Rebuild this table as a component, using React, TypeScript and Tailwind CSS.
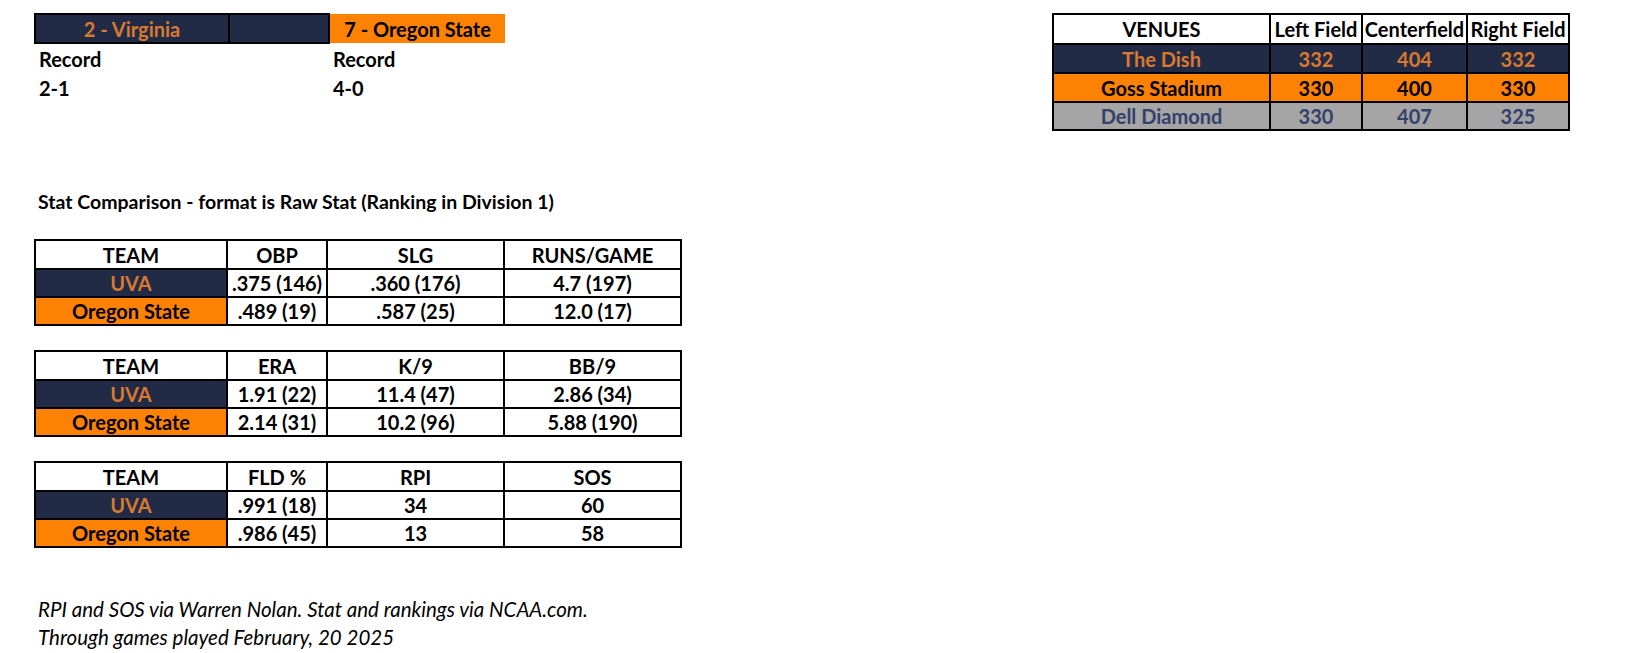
import React from "react";

const NAVY = "bg-[#222b45]";
const ORANGE_BG = "bg-[#fd8204]";

type Row = { team: "uva" | "osu"; vals: string[] };

function StatTable({ headers, rows }: { headers: string[]; rows: Row[] }) {
  return (
    <div className="grid grid-cols-[190px_98px_175px_175px] grid-rows-[27px_26px_26px] gap-[2px] border-2 border-black bg-black w-[648px]">
      {headers.map((h, i) => (
        <div key={i} className="bg-white flex items-center justify-center text-black">
          {h}
        </div>
      ))}
      {rows.map((r, ri) => (
        <React.Fragment key={ri}>
          <div
            className={
              r.team === "uva"
                ? "bg-[#222b45] text-[#d9792f] flex items-center justify-center"
                : "bg-[#fd8204] text-black flex items-center justify-center"
            }
          >
            {r.team === "uva" ? "UVA" : "Oregon State"}
          </div>
          {r.vals.map((v, vi) => (
            <div key={vi} className="bg-white flex items-center justify-center text-black">
              {v}
            </div>
          ))}
        </React.Fragment>
      ))}
    </div>
  );
}

export default function App() {
  return (
    <div
      className="w-[1630px] h-[653px] bg-white text-black font-bold text-[20px] leading-none relative overflow-hidden"
      style={{ fontFamily: "Lato, 'Open Sans', sans-serif" }}
    >
      <div className="flex items-start pt-[13px] h-[130px]">
        {/* Left block */}
        <div className="ml-[34px] w-[471px]">
          <div className="flex items-start">
            <div className="grid grid-cols-[192px_98px] gap-[2px] bg-black border-2 border-black h-[31px]">
              <div className={`${NAVY} text-[#d9792f] flex items-center justify-center`}>2 - Virginia</div>
              <div className={NAVY}></div>
            </div>
            <div className={`${ORANGE_BG} mt-[1px] w-[176px] h-[29px] flex items-center justify-center text-black`}>
              7 - Oregon State
            </div>
          </div>
          <div className="grid grid-cols-[294px_177px]">
            <div className="h-[29px] flex items-center pl-[5px]">Record</div>
            <div className="h-[29px] flex items-center pl-[5px]">Record</div>
            <div className="h-[29px] flex items-center pl-[5px]">2-1</div>
            <div className="h-[29px] flex items-center pl-[5px]">4-0</div>
          </div>
        </div>

        {/* Venues */}
        <div className="ml-[547px] grid grid-cols-[215px_90px_103px_100px] grid-rows-[28px_27px_27px_26px] gap-[2px] bg-black border-2 border-black w-[518px]">
          <div className="bg-white flex items-center justify-center">VENUES</div>
          <div className="bg-white flex items-center justify-center">Left Field</div>
          <div className="bg-white flex items-center justify-center">Centerfield</div>
          <div className="bg-white flex items-center justify-center">Right Field</div>

          <div className={`${NAVY} text-[#d9792f] flex items-center justify-center`}>The Dish</div>
          <div className={`${NAVY} text-[#d9792f] flex items-center justify-center`}>332</div>
          <div className={`${NAVY} text-[#d9792f] flex items-center justify-center`}>404</div>
          <div className={`${NAVY} text-[#d9792f] flex items-center justify-center`}>332</div>

          <div className={`${ORANGE_BG} flex items-center justify-center`}>Goss Stadium</div>
          <div className={`${ORANGE_BG} flex items-center justify-center`}>330</div>
          <div className={`${ORANGE_BG} flex items-center justify-center`}>400</div>
          <div className={`${ORANGE_BG} flex items-center justify-center`}>330</div>

          <div className="bg-[#a5a5a5] text-[#33416b] flex items-center justify-center">Dell Diamond</div>
          <div className="bg-[#a5a5a5] text-[#33416b] flex items-center justify-center">330</div>
          <div className="bg-[#a5a5a5] text-[#33416b] flex items-center justify-center">407</div>
          <div className="bg-[#a5a5a5] text-[#33416b] flex items-center justify-center">325</div>
        </div>
      </div>

      <div className="ml-[38px] mt-[62px] h-[20px] flex items-center text-[19.5px]">
        Stat Comparison - format is Raw Stat (Ranking in Division 1)
      </div>

      <div className="ml-[34px] mt-[27px] flex flex-col gap-[24px]">
        <StatTable
          headers={["TEAM", "OBP", "SLG", "RUNS/GAME"]}
          rows={[
            { team: "uva", vals: [".375 (146)", ".360 (176)", "4.7 (197)"] },
            { team: "osu", vals: [".489 (19)", ".587 (25)", "12.0 (17)"] },
          ]}
        />
        <StatTable
          headers={["TEAM", "ERA", "K/9", "BB/9"]}
          rows={[
            { team: "uva", vals: ["1.91 (22)", "11.4 (47)", "2.86 (34)"] },
            { team: "osu", vals: ["2.14 (31)", "10.2 (96)", "5.88 (190)"] },
          ]}
        />
        <StatTable
          headers={["TEAM", "FLD %", "RPI", "SOS"]}
          rows={[
            { team: "uva", vals: [".991 (18)", "34", "60"] },
            { team: "osu", vals: [".986 (45)", "13", "58"] },
          ]}
        />
      </div>

      <div className="ml-[38px] mt-[47px] font-normal italic flex flex-col text-[20.5px]">
        <div className="h-[28px] flex items-center">RPI and SOS via Warren Nolan. Stat and rankings via NCAA.com.</div>
        <div className="h-[28px] flex items-center">Through games played February, 20 2025</div>
      </div>
    </div>
  );
}
